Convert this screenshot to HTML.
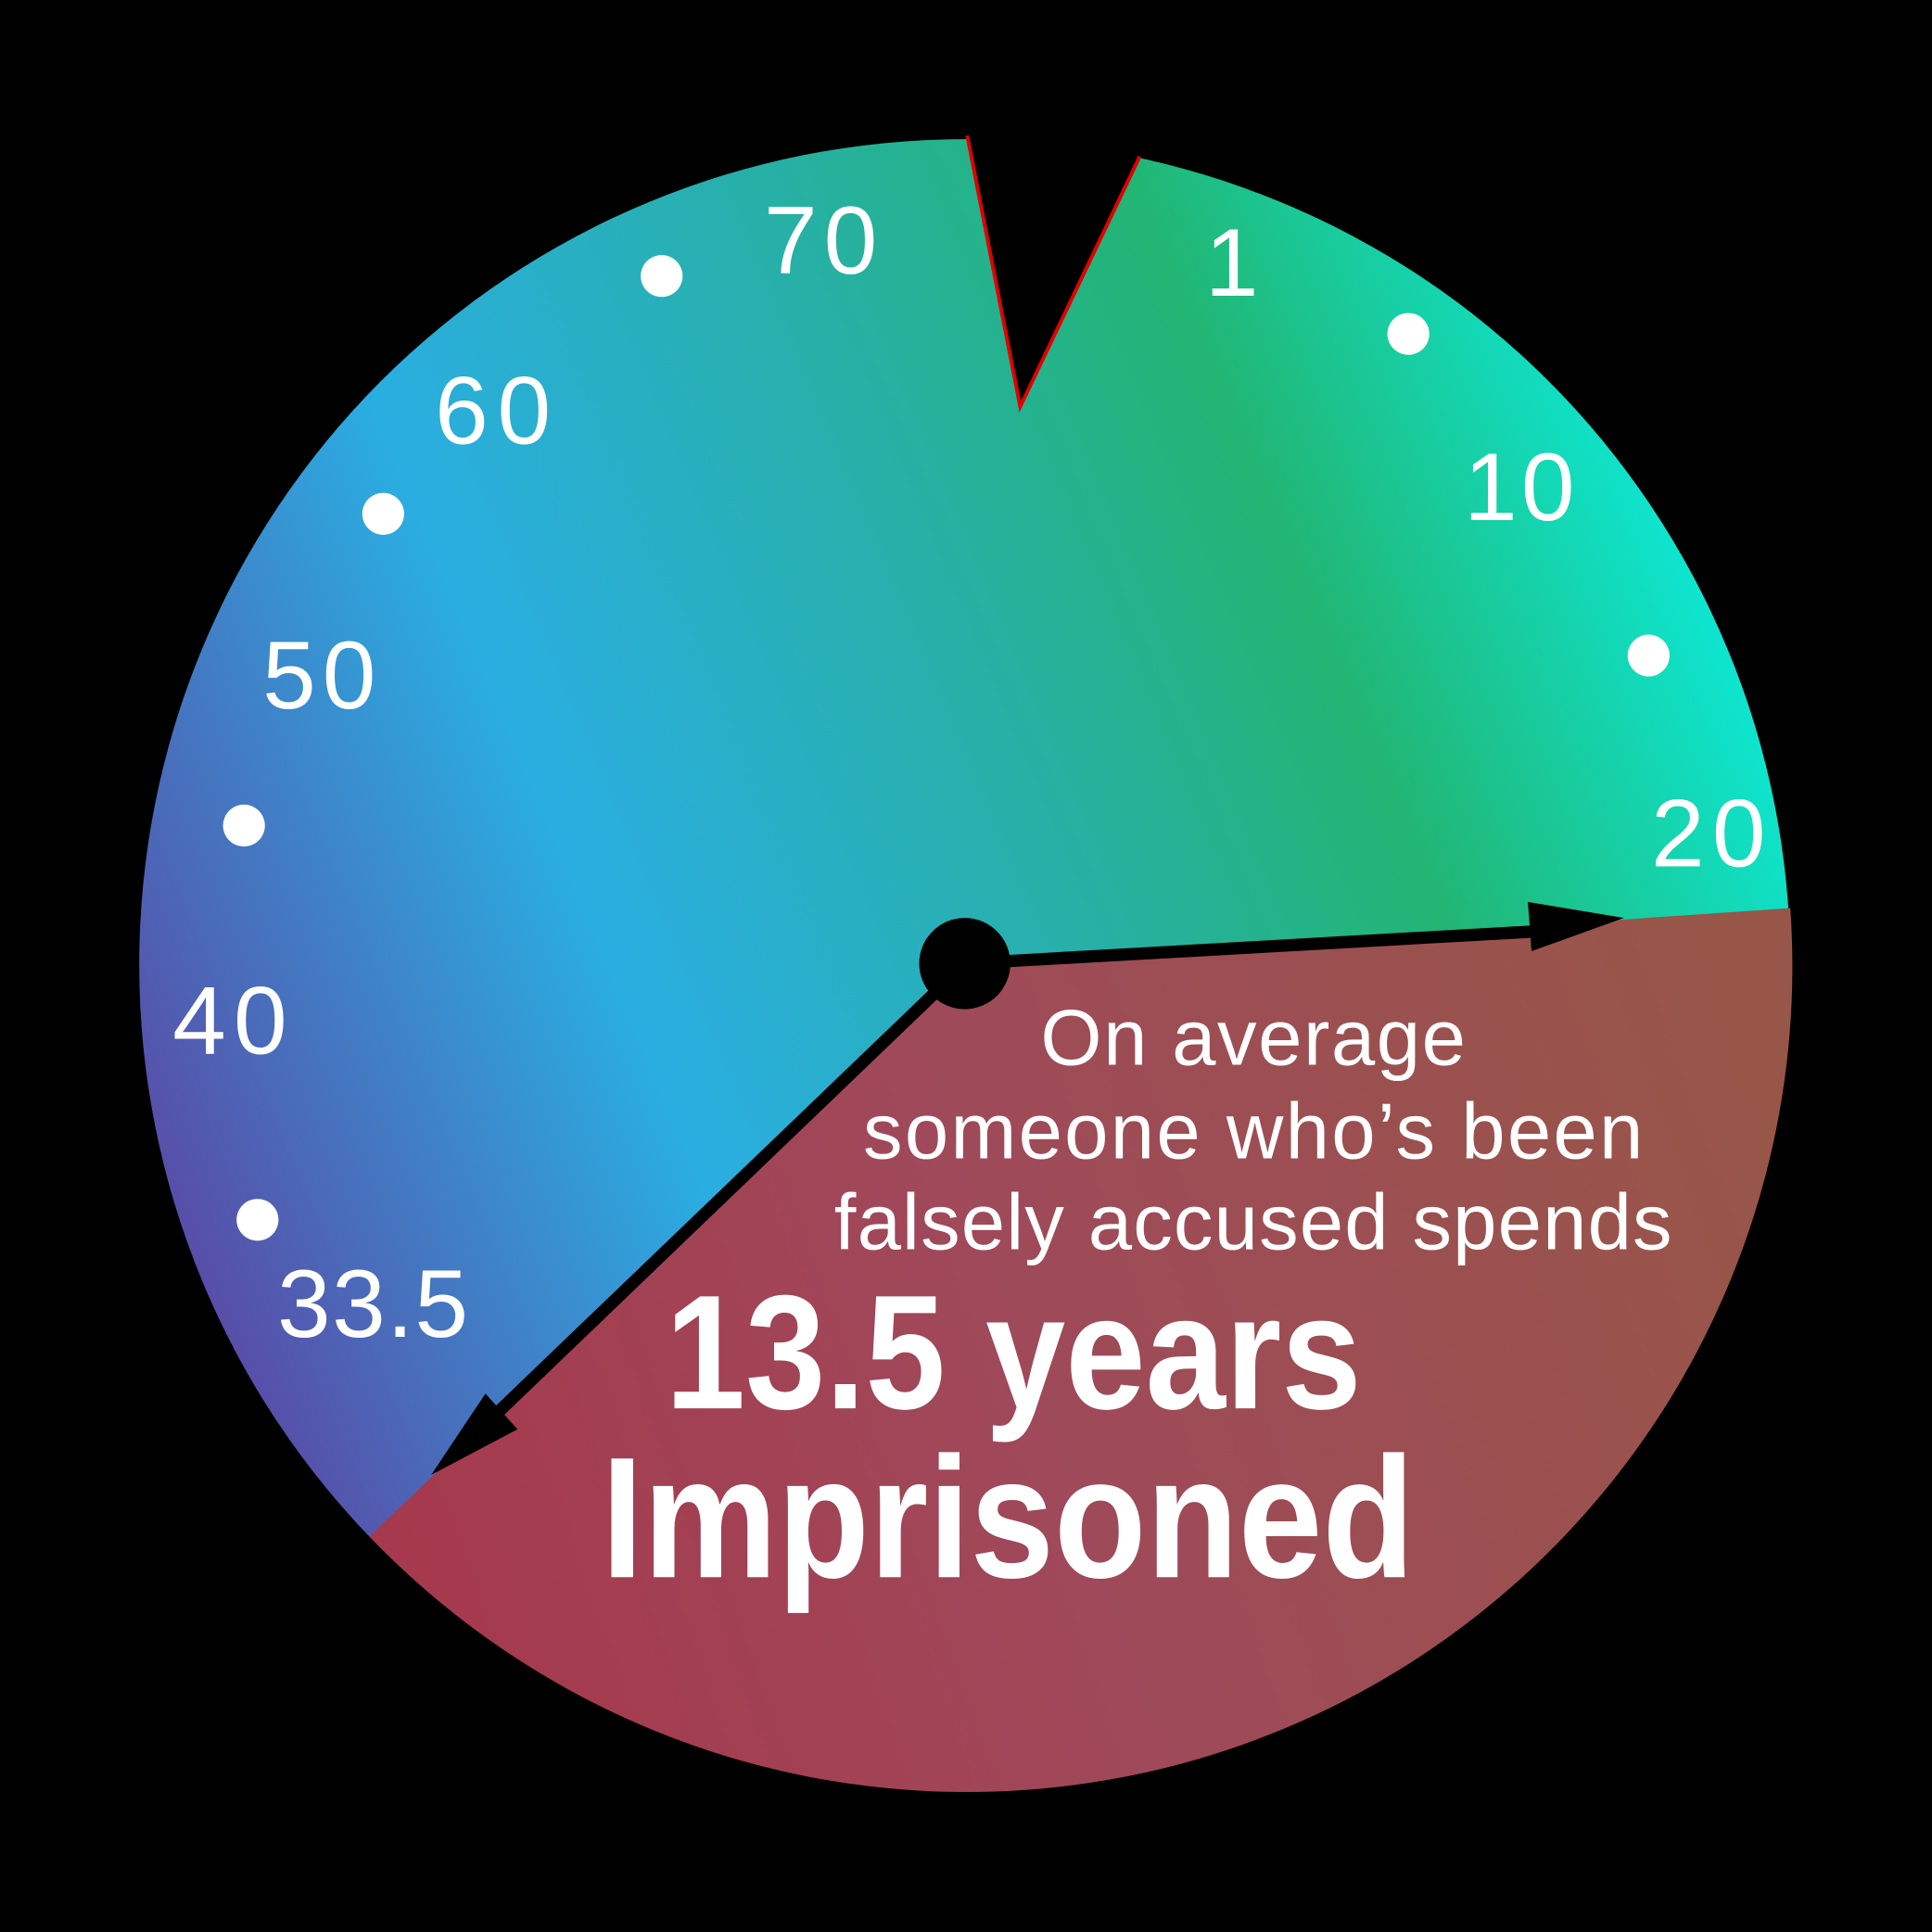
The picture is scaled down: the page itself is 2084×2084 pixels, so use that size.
<!DOCTYPE html>
<html><head><meta charset="utf-8"><style>
html,body{margin:0;padding:0;background:#000;width:2084px;height:2084px;overflow:hidden}
svg{display:block}
text{font-family:"Liberation Sans",sans-serif;fill:#fff}
</style></head><body>
<svg width="2084" height="2084" viewBox="0 0 1568 1568" xmlns="http://www.w3.org/2000/svg">
<defs>
<linearGradient id="g1" x1="150" y1="1050" x2="1450" y2="500" gradientUnits="userSpaceOnUse">
<stop offset="0" stop-color="#5a4aa6"/>
<stop offset="0.3" stop-color="#2aaee2"/>
<stop offset="0.55" stop-color="#27b0a8"/>
<stop offset="0.75" stop-color="#22b573"/>
<stop offset="1" stop-color="#0aeee0"/>
</linearGradient>
<linearGradient id="g2" x1="300" y1="1300" x2="1450" y2="900" gradientUnits="userSpaceOnUse">
<stop offset="0" stop-color="#a6384c"/>
<stop offset="0.45" stop-color="#9f495a"/>
<stop offset="1" stop-color="#985648"/>
</linearGradient>
</defs>
<rect width="1568" height="1568" fill="#000"/>
<circle cx="783" cy="783" r="670" fill="url(#g1)"/>
<path d="M783,783 L1453,737 A670,670 0 0 1 300,1247 Z" fill="url(#g2)"/>
<path d="M785,108 L828,330 L925,125 L925,90 L785,90 Z" fill="#000"/>
<path d="M785,110 L828,330 L925,127" fill="none" stroke="#e00000" stroke-width="3"/>
<g fill="#fff">
<circle cx="537" cy="224" r="17"/><circle cx="1143" cy="271" r="17"/>
<circle cx="311" cy="417" r="17"/><circle cx="1338" cy="532" r="17"/>
<circle cx="198" cy="670" r="17"/><circle cx="209" cy="990" r="17"/>
</g>
<g font-size="78">
<text x="620" y="222" textLength="92">70</text>
<text x="978" y="240">1</text>
<text x="1188" y="422" textLength="90">10</text>
<text x="1340" y="703" textLength="93">20</text>
<text x="353" y="360" textLength="94">60</text>
<text x="213" y="575" textLength="92">50</text>
<text x="140" y="855" textLength="93">40</text>
<text x="225" y="1085" textLength="155">33.5</text>
</g>
<g font-size="64" text-anchor="middle">
<text x="1017" y="864" textLength="345">On average</text>
<text x="1017" y="940" textLength="633">someone who’s been</text>
<text x="1017" y="1014" textLength="680">falsely accused spends</text>
</g>
<g font-weight="bold">
<text x="540" y="1143" font-size="132" textLength="565" lengthAdjust="spacingAndGlyphs">13.5 years</text>
<text x="488" y="1280" font-size="140" textLength="660" lengthAdjust="spacingAndGlyphs">Imprisoned</text>
</g>
<line x1="783" y1="782" x2="1245" y2="756" stroke="#000" stroke-width="10"/>
<path d="M1240,732 L1318,745 L1243,772 Z" fill="#000"/>
<line x1="770" y1="795" x2="395" y2="1155" stroke="#000" stroke-width="10"/>
<path d="M394,1131 L350,1197 L420,1160 Z" fill="#000"/>
<circle cx="783" cy="782" r="37" fill="#000"/>
</svg>
</body></html>
